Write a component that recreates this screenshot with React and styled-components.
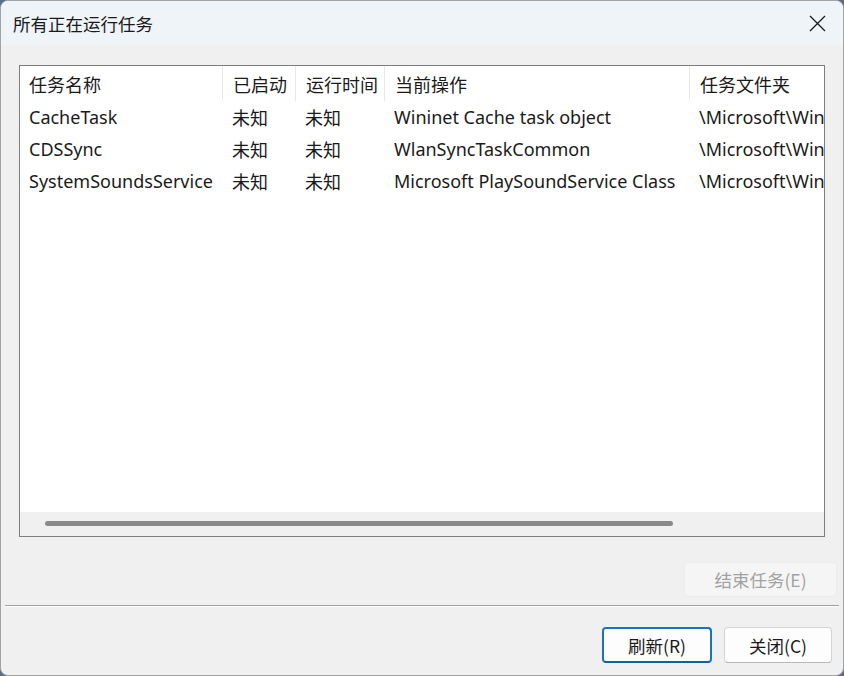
import React from 'react';
import styled, { createGlobalStyle } from 'styled-components';

const Global = createGlobalStyle`
    html, body {
        margin: 0;
        padding: 0;
        background: #5a6e86;
    }
    * {
        box-sizing: border-box;
    }
`

const Window = styled.div`
    width: 844px;
    height: 676px;
    display: flex;
    flex-direction: column;
    background: #f0f0f0;
    border: 1px solid #a3a3a3;
    border-radius: 8px;
    overflow: hidden;
    font-family: "Noto Sans", "Noto Sans CJK SC", sans-serif;
    color: #1a1a1a;
`

const TitleBar = styled.div`
    height: 44px;
    flex: none;
    display: flex;
    align-items: center;
    justify-content: space-between;
    background: #eff4f9;
    padding: 0 14px 0 12px;
`

const Title = styled.div`
    font-size: 17.5px;
    font-family: "Noto Sans CJK SC", sans-serif;
`

const CloseX = styled.div`
    width: 24px;
    height: 24px;
    display: flex;
    align-items: center;
    justify-content: center;
`

const Body = styled.div`
    flex: 1;
    display: flex;
    flex-direction: column;
    padding: 20px 0 0 0;
`

const ListBox = styled.div`
    margin: 0 18px;
    height: 472px;
    border: 1px solid #7e7e7e;
    background: #fff;
    display: flex;
    flex-direction: column;
    overflow: hidden;
`

const Rows = styled.div`
    flex: 1;
    overflow: hidden;
`

const Row = styled.div`
    display: grid;
    grid-template-columns: 202px 73px 89px 305px 200px;
    height: ${p => (p.head ? '35px' : '32px')};
    white-space: nowrap;
`

const Cell = styled.div`
    display: flex;
    align-items: center;
    padding-left: ${p => (p.first ? '9px' : '10px')};
    font-size: 18px;
    border-left: ${p => (p.head && !p.first ? '1px solid #e8e8e8' : 'none')};
    overflow: hidden;
`

const HScroll = styled.div`
    height: 24px;
    flex: none;
    background: #f0f0f0;
    position: relative;
`

const Thumb = styled.div`
    position: absolute;
    left: 25px;
    top: 9px;
    width: 628px;
    height: 5px;
    border-radius: 3px;
    background: #8a8a8a;
`

const EndRow = styled.div`
    display: flex;
    justify-content: flex-end;
    padding: 25px 6px 0 0;
`

const Divider = styled.div`
    margin: 8px 4px 0 4px;
    height: 2px;
    border-top: 1px solid #a0a0a0;
    border-bottom: 1px solid #ffffff;
`

const Footer = styled.div`
    display: flex;
    justify-content: flex-end;
    gap: 12px;
    padding: 20px 11px 0 0;
`

const Button = styled.button`
    width: ${p => p.w || 110}px;
    height: ${p => p.h || 36}px;
    border-radius: 4px;
    font-family: "Noto Sans CJK SC", sans-serif;
    font-size: 17.5px;
    padding: 0;
    background: ${p => (p.disabled ? '#f5f5f5' : '#fdfdfd')};
    color: ${p => (p.disabled ? '#a2a2a2' : '#1a1a1a')};
    border: ${p =>
        p.primary ? '2px solid #1a72c5' : p.disabled ? '1px solid #ececec' : '1px solid #d4d4d4'};
    border-bottom-color: ${p => (p.primary ? '#0f5fae' : p.disabled ? '#ececec' : '#b8b8b8')};
`

const tasks = [
    ['CacheTask', '未知', '未知', 'Wininet Cache task object', '\\Microsoft\\Windows\\Wininet'],
    ['CDSSync', '未知', '未知', 'WlanSyncTaskCommon', '\\Microsoft\\Windows\\WlanSvc'],
    ['SystemSoundsService', '未知', '未知', 'Microsoft PlaySoundService Class', '\\Microsoft\\Windows\\Multimedia'],
]

const headers = ['任务名称', '已启动', '运行时间', '当前操作', '任务文件夹']

export default function App() {
    return (
        <Window>
            <Global />
            <TitleBar>
                <Title>所有正在运行任务</Title>
                <CloseX>
                    <svg width="17" height="17" viewBox="0 0 17 17">
                        <path d="M1 1 L16 16 M16 1 L1 16" stroke="#1a1a1a" strokeWidth="1.3" fill="none" />
                    </svg>
                </CloseX>
            </TitleBar>
            <Body>
                <ListBox>
                    <Rows>
                        <Row head>
                            {headers.map((h, i) => (
                                <Cell key={h} head first={i === 0}>{h}</Cell>
                            ))}
                        </Row>
                        {tasks.map(t => (
                            <Row key={t[0]}>
                                {t.map((v, i) => (
                                    <Cell key={i} first={i === 0}>{v}</Cell>
                                ))}
                            </Row>
                        ))}
                    </Rows>
                    <HScroll>
                        <Thumb />
                    </HScroll>
                </ListBox>
                <EndRow>
                    <Button disabled w={153} h={35}>结束任务(E)</Button>
                </EndRow>
                <Divider />
                <Footer>
                    <Button primary>刷新(R)</Button>
                    <Button w={108}>关闭(C)</Button>
                </Footer>
            </Body>
        </Window>
    )
}
